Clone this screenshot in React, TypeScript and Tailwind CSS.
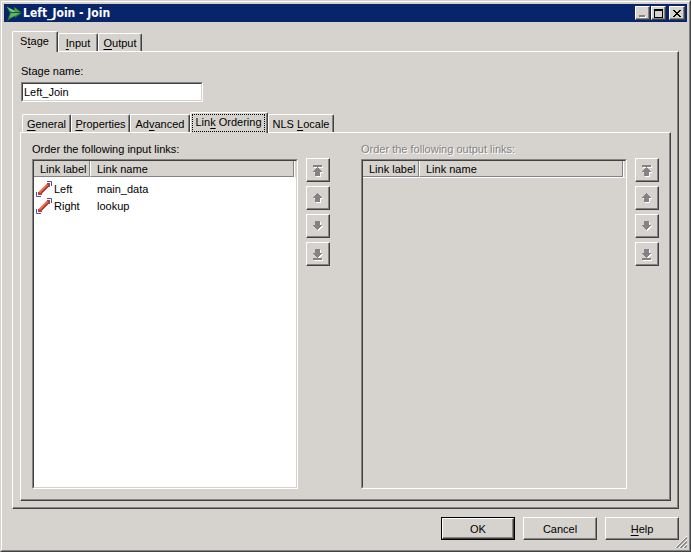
import React from "react";

const RAISED =
  "border border-t-white border-l-white border-r-[#424142] border-b-[#424142] shadow-[inset_-1px_-1px_0_#848284]";
const SUNKEN =
  "border border-t-[#848284] border-l-[#848284] border-r-white border-b-white";

type TabItem = { label: string; hotkey: number; width: string };

function Hot({ label, at }: { label: string; at: number }) {
  return (
    <span className="whitespace-pre">
      {label.slice(0, at)}
      <span className="underline underline-offset-2">{label[at]}</span>
      {label.slice(at + 1)}
    </span>
  );
}

function Tabs({ name, items, active, focused }: { name: string; items: TabItem[]; active: number; focused?: boolean }) {
  return (
    <div role="tablist" aria-label={name} className="flex h-5 items-end">
      {items.map((t, i) => (
        <button
          key={t.label}
          role="tab"
          aria-selected={i === active}
          className={`${t.width} flex shrink-0 justify-center rounded-t-[2px] border-t border-r border-l border-t-white border-r-[#424142] border-l-white bg-[#d6d3ce] shadow-[inset_-1px_0_0_#848284] ${
            i === active ? "relative z-10 -mb-px h-[21px] p-px pr-0.5" : "h-[18px] pt-0.5"
          }`}
        >
          <span
            className={
              i === active && focused
                ? "flex h-[18px] w-full justify-center border border-dotted border-black"
                : i === active
                  ? "pt-px"
                  : ""
            }
          >
            <Hot label={t.label} at={t.hotkey} />
          </span>
        </button>
      ))}
    </div>
  );
}

function AppIcon() {
  return (
    <svg width="17" height="16" viewBox="0 0 17 16" aria-hidden="true">
      <path d="M0 1 L8 5 V2 L10 3 L16 8 L9 13 V11 L1 16 L4 8Z" fill="#1f7a35" />
      <path d="M1 2 L9 6 L8 8 L4 6Z" fill="#7cc878" />
      <path d="M5 8 H14 L9 11 L3 13Z" fill="#63b263" />
      <path d="M9 3 L14 7 L9 7Z" fill="#4aa552" />
      <path d="M5 7.5 H15" stroke="#12582a" />
    </svg>
  );
}

function LinkIcon() {
  return (
    <svg width="16" height="16" viewBox="0 0 16 16" aria-hidden="true">
      <path d="M11 .5H15.5V5M.5 11V15.5H5" fill="none" stroke="#4a4dad" />
      <path d="M4.5 12.5L12.5 4.5" stroke="#8c3029" strokeWidth="2" />
      <path d="M2 11h4v3H2zM11 2h3v4h-3z" fill="#b5412f" />
      <path d="M3.5 11.5L11.5 3.5" stroke="#ef694a" strokeWidth="2" />
    </svg>
  );
}

type Move = "top" | "up" | "down" | "bottom";
const MOVES: { kind: Move; label: string }[] = [
  { kind: "top", label: "Move to top" },
  { kind: "up", label: "Move up" },
  { kind: "down", label: "Move down" },
  { kind: "bottom", label: "Move to bottom" },
];
const SHAPES: Record<Move, string> = {
  top: "M1 1h9v2H1zM5 3h1v1h1v1h1v1h1v1h1v1H8v4H3V8H1V7h1V6h1V5h1V4h1z",
  up: "M5 1h1v1h1v1h1v1h1v1h1v1H8v4H3V6H1V5h1V4h1V3h1V2h1z",
  down: "M3 1h5v4h2v1H9v1H8v1H7v1H6v1H5V9H4V8H3V7H2V6H1V5h2z",
  bottom: "M3 1h5v4h2v1H9v1H8v1H7v1H6v1H5V9H4V8H3V7H2V6H1V5h2zM1 10h9v2H1z",
};

function MoveButtons({ side }: { side: string }) {
  return (
    <div className="flex flex-col gap-1 pt-4">
      {MOVES.map((m) => (
        <button
          key={m.kind}
          disabled
          aria-label={`${m.label}, ${side} links`}
          className={`flex size-6 items-center justify-center ${RAISED}`}
        >
          <svg width="12" height="12" viewBox="0 0 12 12" className="overflow-visible" shapeRendering="crispEdges">
            <path d={SHAPES[m.kind]} fill="#fff" transform="translate(1 1)" />
            <path d={SHAPES[m.kind]} fill="#848284" />
          </svg>
        </button>
      ))}
    </div>
  );
}

function LinkList({ side, rows, disabled }: { side: string; rows: string[][]; disabled?: boolean }) {
  const id = `${side}-links`;
  return (
    <section className="flex flex-1 gap-2">
      <div className="flex flex-1 flex-col">
        <h2 id={id} className={disabled ? "text-[#848284] [text-shadow:1px_1px_0_#fff]" : ""}>
          Order the following {side} links:
        </h2>
        <div className={`mt-[3px] flex-1 ${SUNKEN}`}>
          <div
            className={`h-full border border-t-[#424142] border-r-[#d6d3ce] border-b-[#d6d3ce] border-l-[#424142] ${disabled ? "" : "bg-white"}`}
          >
            <table aria-labelledby={id} className="w-full table-fixed border-separate border-spacing-0 text-left">
              <thead>
                <tr className="bg-[#d6d3ce] shadow-[0_1px_0_#fff]">
                  <th className="h-4 w-14 border-r border-b border-[#848284] p-0 pl-1.5 font-normal whitespace-nowrap">Link label</th>
                  <th className="border-r border-b border-l border-r-[#848284] border-b-[#848284] border-l-white p-0 pl-1.5 font-normal">
                    Link name
                  </th>
                  <th aria-hidden="true" className="w-0.5 border-l border-white p-0" />
                </tr>
              </thead>
              <tbody className="before:block before:h-[3px] before:content-['']">
                {rows.map(([label, name]) => (
                  <tr key={label}>
                    <td className="h-[17px] p-0 pl-0.5">
                      <div className="flex gap-0.5 whitespace-nowrap">
                        <LinkIcon />
                        <span className="pt-px">{label}</span>
                      </div>
                    </td>
                    <td className="p-0 pl-[7px]">{name}</td>
                    <td className="p-0" />
                  </tr>
                ))}
              </tbody>
            </table>
          </div>
        </div>
      </div>
      <MoveButtons side={side} />
    </section>
  );
}

const CAPTION = `flex h-3.5 items-center justify-center bg-[#d6d3ce] ${RAISED}`;
const ACTION = `flex h-[23px] w-[74px] items-center justify-center ${RAISED}`;

export default function App() {
  return (
    <div className="flex min-h-screen flex-col border border-t-[#d6d3ce] border-r-[#424142] border-b-[#424142] border-l-[#d6d3ce] bg-[#d6d3ce] font-['Liberation_Sans',Arial,sans-serif] text-[11px] leading-[14px] text-black">
      <div className="relative flex flex-1 flex-col border border-t-white border-r-[#848284] border-b-[#848284] border-l-white p-0.5">
        <header className="flex h-[18px] items-center bg-[#08246b] pr-0.5 text-white">
          <span className="ml-0.5 flex">
            <AppIcon />
          </span>
          <h1 className="flex-1 font-['DejaVu_Sans_Condensed','DejaVu_Sans',sans-serif] text-xs leading-[14px] font-bold">
            Left_Join - Join
          </h1>
          <button aria-label="Minimize" className={`${CAPTION} mr-px w-[15px]`}>
            <svg width="8" height="10" shapeRendering="crispEdges">
              <path d="M1 8h6v2H1z" fill="#fff" />
              <path d="M0 7h6v2H0z" fill="#848284" />
            </svg>
          </button>
          <button aria-label="Maximize" className={`${CAPTION} mr-[3px] w-[15px] text-black`}>
            <svg width="9" height="9" shapeRendering="crispEdges">
              <path d="M0 0h9v9H0zM1 2v6h7V2z" fill="currentColor" fillRule="evenodd" />
            </svg>
          </button>
          <button aria-label="Close" className={`${CAPTION} w-4 text-black`}>
            <svg width="8" height="7" shapeRendering="crispEdges">
              <path
                d="M0 0h2v1h1v1h2V1h1V0h2v1H7v1H6v1H5v1h1v1h1v1h1v1H6V6H5V5H3v1H2v1H0V6h1V5h1V4h1V3H2V2H1V1H0z"
                fill="currentColor"
              />
            </svg>
          </button>
        </header>

        <main className="flex flex-1 flex-col px-2 pt-[9px] pb-2">
          <Tabs
            name="Sections"
            active={0}
            items={[
              { label: "Stage", hotkey: 1, width: "w-[46px]" },
              { label: "Input", hotkey: 0, width: "w-10" },
              { label: "Output", hotkey: 0, width: "w-11" },
            ]}
          />
          <div className={`flex flex-1 flex-col pt-3 pr-[7px] pb-[7px] pl-[7px] ${RAISED}`}>
            <label htmlFor="stage-name" className="ml-px">
              Stage name:
            </label>
            <div className={`mt-1 mb-2.5 ml-px h-5 w-[182px] ${SUNKEN}`}>
              <input
                id="stage-name"
                defaultValue="Left_Join"
                className="block h-full w-full border border-t-[#424142] border-r-[#d6d3ce] border-b-[#d6d3ce] border-l-[#424142] bg-white pl-px outline-none"
              />
            </div>
            <div className="pl-0.5">
              <Tabs
                name="Stage pages"
                active={3}
                focused
                items={[
                  { label: "General", hotkey: 0, width: "w-[49px]" },
                  { label: "Properties", hotkey: 0, width: "w-[59px]" },
                  { label: "Advanced", hotkey: 2, width: "w-[60px]" },
                  { label: "Link Ordering", hotkey: 3, width: "w-[78px]" },
                  { label: "NLS Locale", hotkey: 4, width: "w-[66px]" },
                ]}
              />
            </div>
            <div className={`flex flex-1 gap-[31px] pt-[9px] pr-[11px] pb-[11px] pl-[11px] ${RAISED}`}>
              <LinkList
                side="input"
                rows={[
                  ["Left", "main_data"],
                  ["Right", "lookup"],
                ]}
              />
              <LinkList side="output" rows={[]} disabled />
            </div>
          </div>

          <footer className="mt-2 flex justify-end gap-2">
            <div className="flex h-[23px] w-[74px] border border-black">
              <button className={`flex-1 ${RAISED}`}>OK</button>
            </div>
            <button className={ACTION}>Cancel</button>
            <button className={ACTION}>
              <Hot label="Help" at={0} />
            </button>
          </footer>
        </main>
        <svg width="12" height="12" className="absolute right-0.5 bottom-0.5" aria-hidden="true">
          <path d="M0 12L12 0M4 12L12 4M8 12L12 8" stroke="#fff" strokeWidth="1" />
          <path d="M1.5 12L12 1.5M5.5 12L12 5.5M9.5 12L12 9.5" stroke="#848284" strokeWidth="1.5" />
        </svg>
      </div>
    </div>
  );
}
